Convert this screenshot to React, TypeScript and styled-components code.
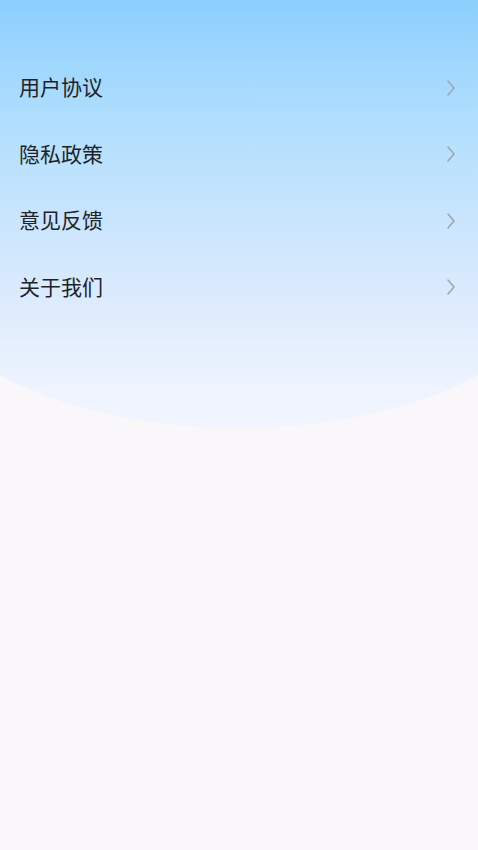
import React from 'react'
import styled, { createGlobalStyle } from 'styled-components'

const GlobalStyle = createGlobalStyle`
  html, body {
    margin: 0;
    padding: 0;
    background: #f8f7fa;
  }
  body {
    font-family: "Noto Sans CJK SC", "Noto Sans", sans-serif;
  }
`

const Page = styled.div`
  min-height: 850px;
  background: #f9f7fa;
  overflow: hidden;
`

const Hero = styled.div`
  width: 640px;
  height: 428px;
  margin-left: calc(50% - 320px);
  border-radius: 0 0 50% 50% / 0 0 158px 158px;
  background: linear-gradient(180deg, #8bcffd 0%, #b3dffd 30%, #dcebfd 70%, #eef3fe 90%, #f1f5ff 100%);
`

const Menu = styled.ul`
  width: 478px;
  margin: 0 auto;
  padding: 53px 0 0;
  list-style: none;
`

const Row = styled.li`
  display: flex;
  align-items: center;
  justify-content: space-between;
  height: 66.5px;
  padding: 0 22px 0 19px;
  cursor: pointer;
`

const Label = styled.span`
  font-size: 21px;
  color: #1f2329;
`

const Arrow = styled.svg`
  margin-top: 3px;
`

const Chevron = () => (
  <Arrow width="10" height="18" viewBox="0 0 10 18" fill="none">
    <path d="M2 2l6 7-6 7" stroke="#9ba7b4" strokeWidth="1.6" strokeLinecap="round" strokeLinejoin="round" />
  </Arrow>
)

const items = ['用户协议', '隐私政策', '意见反馈', '关于我们']

const App = () => {
  return (
    <Page>
      <GlobalStyle />
      <Hero>
        <Menu>
          {items.map(item => (
            <Row key={item}>
              <Label>{item}</Label>
              <Chevron />
            </Row>
          ))}
        </Menu>
      </Hero>
    </Page>
  )
}

export default App
